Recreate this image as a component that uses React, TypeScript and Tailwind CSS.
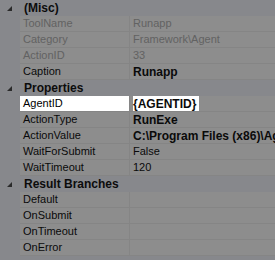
import React from "react";

type Row =
  | { kind: "cat"; label: string }
  | { kind: "prop"; name: string; value: string; disabled?: boolean; bold?: boolean; selected?: boolean };

const rows: Row[] = [
  { kind: "cat", label: "(Misc)" },
  { kind: "prop", name: "ToolName", value: "Runapp", disabled: true },
  { kind: "prop", name: "Category", value: "Framework\\Agent", disabled: true },
  { kind: "prop", name: "ActionID", value: "33", disabled: true },
  { kind: "prop", name: "Caption", value: "Runapp", bold: true },
  { kind: "cat", label: "Properties" },
  { kind: "prop", name: "AgentID", value: "{AGENTID}", bold: true, selected: true },
  { kind: "prop", name: "ActionType", value: "RunExe", bold: true },
  { kind: "prop", name: "ActionValue", value: "C:\\Program Files (x86)\\Agent\\runapp.exe", bold: true },
  { kind: "prop", name: "WaitForSubmit", value: "False" },
  { kind: "prop", name: "WaitTimeout", value: "120" },
  { kind: "cat", label: "Result Branches" },
  { kind: "prop", name: "Default", value: "" },
  { kind: "prop", name: "OnSubmit", value: "" },
  { kind: "prop", name: "OnTimeout", value: "" },
  { kind: "prop", name: "OnError", value: "" },
];

function Expander() {
  return (
    <svg width="5" height="5" viewBox="0 0 5 5" className="block">
      <polygon points="5,0 5,5 0,5" fill="#2a2a2a" />
    </svg>
  );
}

export default function App() {
  return (
    <div
      className="w-[275px] h-[260px] overflow-hidden bg-[#87888c] text-[11px] leading-none"
      style={{ fontFamily: '"Liberation Sans", Arial, sans-serif' }}
    >
      {rows.map((r, i) =>
        r.kind === "cat" ? (
          <div key={i} className="flex items-center h-[16px] bg-[#87888c]">
            <div className="w-[20px] flex justify-end pr-[8px] pt-[1px]">
              <Expander />
            </div>
            <span className="pl-[4px] font-bold text-[12px] text-[#0c0c0c]">{r.label}</span>
          </div>
        ) : (
          <div key={i} className="flex h-[16px]">
            <div className="w-[20px] shrink-0 bg-[#87888c]" />
            <div
              className={
                "w-[110px] shrink-0 flex items-center pl-[3px] border-b border-r border-[#858585] " +
                (r.selected ? "bg-white text-black" : "bg-[#8d8d8d] ") +
                (r.disabled ? "text-[#626262]" : "text-[#0a0a0a]")
              }
            >
              {r.name}
            </div>
            <div className="flex-1 flex items-center pl-[3px] border-b border-[#858585] bg-[#8d8d8d] overflow-hidden whitespace-nowrap">
              {r.value && (
                <span
                  className={
                    "h-[15px] flex items-center " +
                    (r.selected ? "bg-white pr-[3px] " : "") +
                    (r.bold ? "font-bold text-[12px] " : "") +
                    (r.disabled ? "text-[#626262]" : "text-[#0a0a0a]")
                  }
                >
                  {r.value}
                </span>
              )}
            </div>
          </div>
        )
      )}
    </div>
  );
}
